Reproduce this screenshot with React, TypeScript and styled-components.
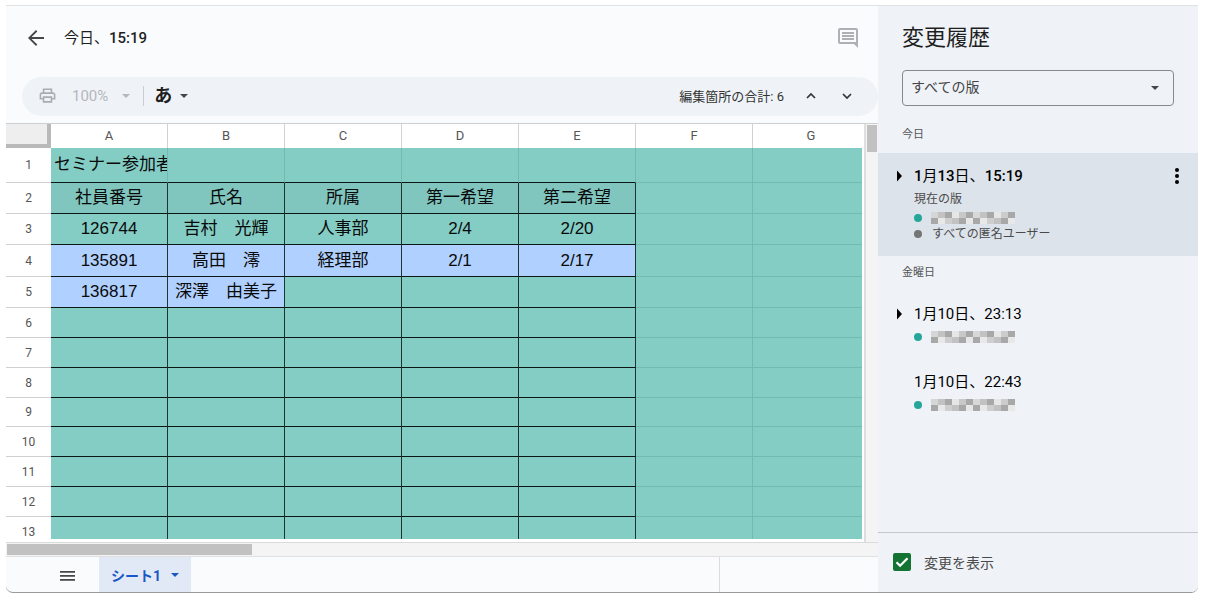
import React from "react";
import styled, { createGlobalStyle, css } from "styled-components";

const GlobalStyle = createGlobalStyle`
  * { box-sizing: border-box; }
  body {
    margin: 0;
    background: #fff;
    color: #1f1f1f;
    font-family: Roboto, "Noto Sans CJK JP", sans-serif;
  }
  button, select, input { font: inherit; color: inherit; }
  h1, h2, h3, p, ul { margin: 0; padding: 0; font-weight: 400; }
`;

const Page = styled.div`
  height: 100vh;
  padding: 5px 8px 6px 6px;
`;

const Window = styled.div`
  display: flex;
  height: 100%;
  overflow: hidden;
  border-top: 1px solid #dfe1e5;
  border-bottom: 1px solid #9a9a9a;
  border-radius: 0 0 7px 7px;
  background: #f9fbfd;
`;

const Main = styled.main`
  flex: 1;
  min-width: 0;
  display: flex;
  flex-direction: column;
`;

const Header = styled.header`
  flex: none;
  display: flex;
  align-items: center;
  height: 63px;
  margin-bottom: 8px;
  padding: 0 18px;
`;

const IconButton = styled.button`
  display: flex;
  align-items: center;
  justify-content: center;
  flex: none;
  padding: 0;
  border: 0;
  background: none;
  cursor: pointer;
`;

const Title = styled.h1`
  flex: 1;
  margin-left: 16px;
  font-size: 15px;
  line-height: 24px;
  font-weight: 500;
`;

const Plain = styled.span`
  font-weight: 400;
`;

const Toolbar = styled.div`
  flex: none;
  display: flex;
  align-items: center;
  height: 39px;
  margin: 0 0 7px 16px;
  padding: 0 19px 2px 16px;
  border-radius: 20px;
  background: #eff3f8;
`;

const ZoomButton = styled.button`
  display: flex;
  align-items: center;
  gap: 14px;
  margin-left: 15px;
  padding: 0;
  border: 0;
  background: none;
  color: #b4b7bb;
  font-size: 15px;
`;

const Separator = styled.span`
  width: 1px;
  height: 20px;
  margin: 0 10px 0 13px;
  background: #c9cdd2;
`;

const InputToolsButton = styled.button`
  display: flex;
  align-items: center;
  gap: 8px;
  padding: 0;
  border: 0;
  background: none;
  font-size: 18px;
  line-height: 24px;
  font-weight: 700;
`;

const EditCount = styled.span`
  margin: 0 15px 0 auto;
  font-size: 13px;
  color: #333;
`;

const StepButtons = styled.div`
  display: flex;
  gap: 12px;
`;

const SheetArea = styled.div`
  flex: 1;
  min-height: 0;
  display: flex;
  border-top: 1px solid #cdd0d3;
  background: #fff;
`;

const SheetViewport = styled.div`
  flex: 1;
  min-width: 0;
  margin: 0 2px 3px 0;
  overflow: hidden;
`;

const Sheet = styled.table`
  width: calc(100% + 8px);
  table-layout: fixed;
  border-collapse: separate;
  border-spacing: 0;
`;

const Corner = styled.th`
  width: 45px;
  height: 24px;
  padding: 0;
  border-right: 4px solid #b9b9b9;
  border-bottom: 4px solid #b9b9b9;
  background: #eee;
`;

const ColumnHead = styled.th<{ $last: boolean }>`
  width: ${(p) => (p.$last ? "auto" : "117px")};
  padding: 0;
  border-right: 1px solid #d2d2d2;
  background: #fff;
  color: #555;
  font-size: 13px;
  line-height: 16px;
  font-weight: 400;
`;

const RowHead = styled.th`
  padding: 0;
  border-bottom: 1px solid #d0d0d0;
  background: #fff;
  color: #555;
  font-size: 12px;
  line-height: 16px;
  font-weight: 400;
`;

const SheetRow = styled.tr<{ $height: number }>`
  height: ${(p) => p.$height}px;
`;

const fills = { base: "#83cdc5", head: "#80c6bf", mine: "#b0d0ff" };

const Cell = styled.td<{
  $fill: keyof typeof fills;
  $rightInk: boolean;
  $bottomInk: boolean;
  $left?: boolean;
}>`
  padding: 0 3px;
  overflow: hidden;
  white-space: pre;
  text-align: ${(p) => (p.$left ? "left" : "center")};
  background: ${(p) => fills[p.$fill]};
  border-right: 1px solid ${(p) => (p.$rightInk ? "#1d3432" : "#74b9b1")};
  border-bottom: 1px solid ${(p) => (p.$bottomInk ? "#0b1615" : "#74b9b1")};
  color: #0a0a0a;
  font-family: "Liberation Sans", "Noto Sans CJK JP", sans-serif;
  font-size: 17px;
  line-height: 24px;
`;

const VerticalScroll = styled.div`
  width: 14px;
  padding: 1px 1px 0 1px;
  border-left: 2px solid #dedede;
  background: #f4f4f4;
`;

const VerticalThumb = styled.div`
  height: 27px;
  background: #c1c1c1;
`;

const HorizontalScroll = styled.div`
  flex: none;
  height: 15px;
  padding: 1px;
  border-top: 1px solid #dadada;
  border-bottom: 1px solid #e0e0e0;
  background: #f4f4f4;
`;

const HorizontalThumb = styled.div`
  width: 245px;
  height: 11px;
  background: #c1c1c1;
`;

const SheetTabs = styled.nav`
  flex: none;
  display: flex;
  height: 35px;
`;

const SheetTabList = styled.div`
  flex: 1;
  display: flex;
  padding-left: 50px;
`;

const SheetTab = styled.button`
  display: flex;
  align-items: center;
  gap: 10px;
  margin-left: 19px;
  padding: 0 12px;
  border: 0;
  background: #e1e9f7;
  color: #1a57c2;
  font-size: 14px;
  font-weight: 700;
`;

const TabsAside = styled.div`
  width: 159px;
  border-left: 1px solid #dcdcdc;
`;

const Panel = styled.aside`
  flex: none;
  display: flex;
  flex-direction: column;
  width: 320px;
  background: #eff3f8;
`;

const PanelTitle = styled.h2`
  padding: 16px 24px 0;
  font-size: 22px;
  line-height: 32px;
`;

const SelectField = styled.label`
  position: relative;
  display: block;
  margin: 16px 24px 12px;
`;

const SelectBox = styled.select`
  display: block;
  width: 100%;
  height: 36px;
  padding: 0 32px 2px 8px;
  appearance: none;
  border: 1px solid #85888c;
  border-radius: 4px;
  background: transparent;
  color: #444;
  font-size: 14px;
`;

const SelectArrow = styled.span`
  position: absolute;
  top: 16px;
  right: 15px;
  display: flex;
  pointer-events: none;
`;

const DayLabel = styled.h3`
  padding: 9px 24px 10px;
  color: #555;
  font-size: 11px;
  line-height: 16px;
`;

const Version = styled.article<{ $active?: boolean }>`
  display: flex;
  align-items: flex-start;
  padding: 11px 12px 14px 18px;
  ${(p) =>
    p.$active &&
    css`
      background: #dde3eb;
    `}
`;

const CaretSlot = styled.div`
  display: flex;
  flex: none;
  width: 18px;
`;

const VersionBody = styled.div`
  flex: 1;
`;

const VersionTitle = styled.p<{ $strong?: boolean }>`
  margin-bottom: 3px;
  color: #000;
  font-size: 15px;
  line-height: 24px;
  font-weight: ${(p) => (p.$strong ? 500 : 400)};
`;

const VersionNote = styled.p`
  margin-bottom: 3px;
  color: #4a4a4a;
  font-size: 12px;
  line-height: 16px;
`;

const UserList = styled.ul`
  list-style: none;
`;

const User = styled.li<{ $color: string }>`
  display: flex;
  align-items: center;
  gap: 10px;
  height: 16px;
  color: #4a4a4a;
  font-size: 12px;
  line-height: 16px;

  &::before {
    content: "";
    flex: none;
    width: 8px;
    height: 8px;
    border-radius: 50%;
    background: ${(p) => p.$color};
  }
`;

const MaskedUser = styled(User)`
  gap: 9px;
`;

const PanelFooter = styled.label`
  display: flex;
  align-items: center;
  gap: 13px;
  height: 60px;
  margin-top: auto;
  padding: 0 0 2px 15px;
  border-top: 1px solid #c4c8cd;
  color: #4a4a4a;
  font-size: 14px;
`;

const CheckWrap = styled.span`
  display: grid;

  & > * {
    grid-area: 1 / 1;
  }

  svg {
    pointer-events: none;
  }
`;

const Check = styled.input`
  width: 18px;
  height: 18px;
  margin: 0;
  appearance: none;
  border: 2px solid #137333;
  border-radius: 2px;

  &:checked {
    background: #137333;
  }
`;

const Svg = ({ size, d, color }: { size: number; d: string; color: string }) => (
  <svg width={size} height={size} viewBox="0 0 24 24" fill={color} aria-hidden="true">
    <path d={d} />
  </svg>
);

const DropArrow = ({ color }: { color: string }) => (
  <svg width="8" height="4" viewBox="0 0 8 4" fill={color} aria-hidden="true">
    <path d="M0 0h8L4 4z" />
  </svg>
);

const mosaicRows = [
  ["d6d6d6", "c2c2c2", "a8a8a8", "e6e6e6", "c8c8c8", "a8a8a8", "d8d8d8", "c2c2c2", "a8a8a8", "e6e6e6", "cccccc", "a8a8a8"],
  ["a8a8a8", "e8e8e8", "cecece", "c2c2c2", "a8a8a8", "e8e8e8", "a8a8a8", "e8e8e8", "cecece", "c2c2c2", "a8a8a8", "e8e8e8"],
];

const HiddenName = () => (
  <svg width="84" height="12" shapeRendering="crispEdges" role="img" aria-label="ユーザー">
    {mosaicRows.map((row, y) =>
      row.map((c, x) => (
        <rect key={`${x}-${y}`} x={x * 7} y={y * 6} width="7" height="6" fill={`#${c}`} />
      ))
    )}
  </svg>
);

const Caret = () => (
  <svg width="6" height="24" viewBox="0 0 6 24" aria-hidden="true">
    <path d="M1 6.500L6 12l-5 5.500z" fill="#000" />
  </svg>
);

const columns = ["A", "B", "C", "D", "E", "F", "G"];

type RowData = { height: number; cells: string[]; mine?: number };

const emptyRowHeights = [30, 30, 30, 29, 30, 30, 30, 30];

const rows: RowData[] = [
  { height: 35, cells: ["セミナー参加者"] },
  { height: 31, cells: ["社員番号", "氏名", "所属", "第一希望", "第二希望"] },
  { height: 31, cells: ["126744", "吉村　光輝", "人事部", "2/4", "2/20"] },
  { height: 32, cells: ["135891", "高田　澪", "経理部", "2/1", "2/17"], mine: 5 },
  { height: 31, cells: ["136817", "深澤　由美子"], mine: 2 },
  ...emptyRowHeights.map((height) => ({ height, cells: [] as string[] })),
];

function fillOf(row: number, col: number): keyof typeof fills {
  if (col < (rows[row].mine ?? 0)) return "mine";
  return row === 1 && col < 5 ? "head" : "base";
}

export default function App() {
  return (
    <Page>
      <GlobalStyle />
      <Window>
        <Main>
          <Header>
            <IconButton aria-label="戻る">
              <Svg size={24} color="#444746" d="M20 11.100H7.600l5.700-5.700L12 4l-8 8 8 8 1.300-1.400-5.700-5.700H20z" />
            </IconButton>
            <Title>
              <Plain>今日、</Plain>15:19
            </Title>
            <IconButton aria-label="コメント">
              <Svg
                size={24}
                color="#aeb0b3"
                d="M21.990 4c0-1.100-.890-2-1.990-2H4c-1.100 0-2 .9-2 2v12c0 1.100.9 2 2 2h14l4 4-.010-18zM20 4v12H4V4h16zM6 12h12v2H6zm0-3h12v2H6zm0-3h12v2H6z"
              />
            </IconButton>
          </Header>

          <Toolbar>
            <IconButton aria-label="印刷">
              <Svg
                size={19}
                color="#a9acb0"
                d="M19 8h-1V3H6v5H5c-1.660 0-3 1.340-3 3v6h4v4h12v-4h4v-6c0-1.660-1.340-3-3-3zM8 5h8v3H8V5zm8 14H8v-4h8v4zm2-4v-2H6v2H4v-4c0-.550.450-1 1-1h14c.550 0 1 .450 1 1v4h-2z"
              />
            </IconButton>
            <ZoomButton>
              100%
              <DropArrow color="#b4b7bb" />
            </ZoomButton>
            <Separator />
            <InputToolsButton>
              あ
              <DropArrow color="#444746" />
            </InputToolsButton>
            <EditCount>編集箇所の合計: 6</EditCount>
            <StepButtons>
              <IconButton aria-label="前の編集">
                <svg width="24" height="24" viewBox="0 0 24 24" fill="none" stroke="#333" strokeWidth="1.700" aria-hidden="true">
                  <path d="M8 14l4-4 4 4" />
                </svg>
              </IconButton>
              <IconButton aria-label="次の編集">
                <svg width="24" height="24" viewBox="0 0 24 24" fill="none" stroke="#333" strokeWidth="1.700" aria-hidden="true">
                  <path d="M8 10l4 4 4-4" />
                </svg>
              </IconButton>
            </StepButtons>
          </Toolbar>

          <SheetArea>
            <SheetViewport>
              <Sheet>
                <thead>
                  <tr>
                    <Corner />
                    {columns.map((c, i) => (
                      <ColumnHead key={c} scope="col" $last={i === columns.length - 1}>
                        {c}
                      </ColumnHead>
                    ))}
                  </tr>
                </thead>
                <tbody>
                  {rows.map((row, r) => (
                    <SheetRow key={r} $height={row.height}>
                      <RowHead scope="row">{r + 1}</RowHead>
                      {columns.map((c, i) => (
                        <Cell
                          key={c}
                          $fill={fillOf(r, i)}
                          $rightInk={r > 0 && i < 5}
                          $bottomInk={i < 5}
                          $left={r === 0}
                        >
                          {row.cells[i] ?? ""}
                        </Cell>
                      ))}
                    </SheetRow>
                  ))}
                </tbody>
              </Sheet>
            </SheetViewport>
            <VerticalScroll>
              <VerticalThumb />
            </VerticalScroll>
          </SheetArea>
          <HorizontalScroll>
            <HorizontalThumb />
          </HorizontalScroll>

          <SheetTabs>
            <SheetTabList>
              <IconButton aria-label="すべてのシート">
                <svg width="24" height="24" viewBox="0 0 24 24" fill="#444746" aria-hidden="true">
                  <path d="M4 8h15v1.700H4zm0 4h15v1.700H4zm0 4h15v1.700H4z" />
                </svg>
              </IconButton>
              <SheetTab>
                シート1
                <DropArrow color="#1a57c2" />
              </SheetTab>
            </SheetTabList>
            <TabsAside />
          </SheetTabs>
        </Main>

        <Panel>
          <PanelTitle>変更履歴</PanelTitle>
          <SelectField>
            <SelectBox aria-label="表示する版" defaultValue="all">
              <option value="all">すべての版</option>
            </SelectBox>
            <SelectArrow>
              <DropArrow color="#444746" />
            </SelectArrow>
          </SelectField>

          <DayLabel>今日</DayLabel>
          <Version $active>
            <CaretSlot>
              <Caret />
            </CaretSlot>
            <VersionBody>
              <VersionTitle $strong>
                1<Plain>月</Plain>13<Plain>日、</Plain>15:19
              </VersionTitle>
              <VersionNote>現在の版</VersionNote>
              <UserList>
                <MaskedUser $color="#26a69a">
                  <HiddenName />
                </MaskedUser>
                <User $color="#757575">すべての匿名ユーザー</User>
              </UserList>
            </VersionBody>
            <IconButton aria-label="その他の操作">
              <svg width="18" height="24" viewBox="0 0 18 24" aria-hidden="true">
                <circle cx="9" cy="6" r="2" />
                <circle cx="9" cy="12" r="2" />
                <circle cx="9" cy="18" r="2" />
              </svg>
            </IconButton>
          </Version>

          <DayLabel>金曜日</DayLabel>
          <Version>
            <CaretSlot>
              <Caret />
            </CaretSlot>
            <VersionBody>
              <VersionTitle>1月10日、23:13</VersionTitle>
              <UserList>
                <MaskedUser $color="#26a69a">
                  <HiddenName />
                </MaskedUser>
              </UserList>
            </VersionBody>
          </Version>
          <Version>
            <CaretSlot />
            <VersionBody>
              <VersionTitle>1月10日、22:43</VersionTitle>
              <UserList>
                <MaskedUser $color="#26a69a">
                  <HiddenName />
                </MaskedUser>
              </UserList>
            </VersionBody>
          </Version>

          <PanelFooter>
            <CheckWrap>
              <Check type="checkbox" defaultChecked />
              <svg width="18" height="18" viewBox="0 0 18 18" fill="none" stroke="#fff" strokeWidth="2.200" aria-hidden="true">
                <path d="M3.500 9.200l3.600 3.600L14.500 5.300" />
              </svg>
            </CheckWrap>
            変更を表示
          </PanelFooter>
        </Panel>
      </Window>
    </Page>
  );
}
